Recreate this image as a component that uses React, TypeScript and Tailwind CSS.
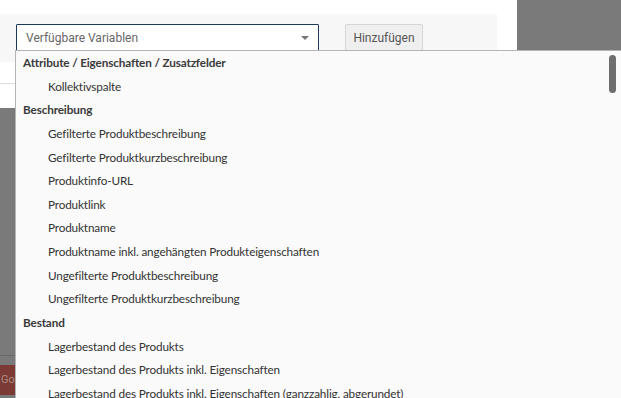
import React from 'react';

const groups: { title: string; items: string[] }[] = [
  { title: 'Attribute / Eigenschaften / Zusatzfelder', items: ['Kollektivspalte'] },
  {
    title: 'Beschreibung',
    items: [
      'Gefilterte Produktbeschreibung',
      'Gefilterte Produktkurzbeschreibung',
      'Produktinfo-URL',
      'Produktlink',
      'Produktname',
      'Produktname inkl. angehängten Produkteigenschaften',
      'Ungefilterte Produktbeschreibung',
      'Ungefilterte Produktkurzbeschreibung',
    ],
  },
  {
    title: 'Bestand',
    items: [
      'Lagerbestand des Produkts',
      'Lagerbestand des Produkts inkl. Eigenschaften',
      'Lagerbestand des Produkts inkl. Eigenschaften (ganzzahlig, abgerundet)',
    ],
  },
];

const App: React.FC = () => {
  return (
    <div className="relative w-[621px] h-[398px] overflow-hidden bg-[#7a7a7a]">
      {/* modal body */}
      <div className="w-[517px] h-[108px] bg-white pt-[14px]">
        <div className="w-[497px] h-[48px] bg-[#f7f7f7] flex items-start pt-[10px] pl-[16px]">
          <div className="w-[303px] h-[27px] bg-white border border-[#1d3a5c] rounded-[1px] flex items-center justify-between pl-[9px] pr-[9px] font-['Roboto',sans-serif] text-[12px] text-[#666]">
            <span>Verfügbare Variablen</span>
            <span className="w-0 h-0 border-l-[4px] border-r-[4px] border-t-[4px] border-l-transparent border-r-transparent border-t-[#777]" />
          </div>
          <div className="ml-[26px] w-[78px] h-[27px] bg-[#efefef] border border-[#d6d6d6] rounded-[2px] flex items-center justify-center font-['Roboto',sans-serif] text-[12px] text-[#555]">
            Hinzufügen
          </div>
        </div>
        <div className="mt-[21px] h-px bg-[#dcdcdc]" />
      </div>

      {/* page behind overlay */}
      <div className="mt-[247px] h-px w-[16px] bg-[#6a6a6a]" />
      <div className="mt-[9px] w-[60px] h-[30px] bg-[#7b3a33] pl-[1px] flex items-center font-['Roboto',sans-serif] text-[11px] text-[#a88a86]">
        Google
      </div>

      {/* dropdown */}
      <div className="absolute left-[15px] top-[50px] w-[620px] h-[360px] bg-[#fafafa] border border-[#b4b4b4] font-['Lato',sans-serif] text-[11.75px] tracking-[-0.15px] text-[#333]">
        {groups.map((g) => (
          <div key={g.title}>
            <div className="h-[23.64px] flex items-center pl-[7px] font-bold text-[#3a3a3a]">{g.title}</div>
            {g.items.map((it) => (
              <div key={it} className="h-[23.64px] flex items-center pl-[32px]">
                {it}
              </div>
            ))}
          </div>
        ))}
        <div className="absolute left-[593px] top-[4px] w-[7px] h-[38px] rounded-full bg-[#6e6e6e]" />
      </div>
    </div>
  );
};

export default App;
